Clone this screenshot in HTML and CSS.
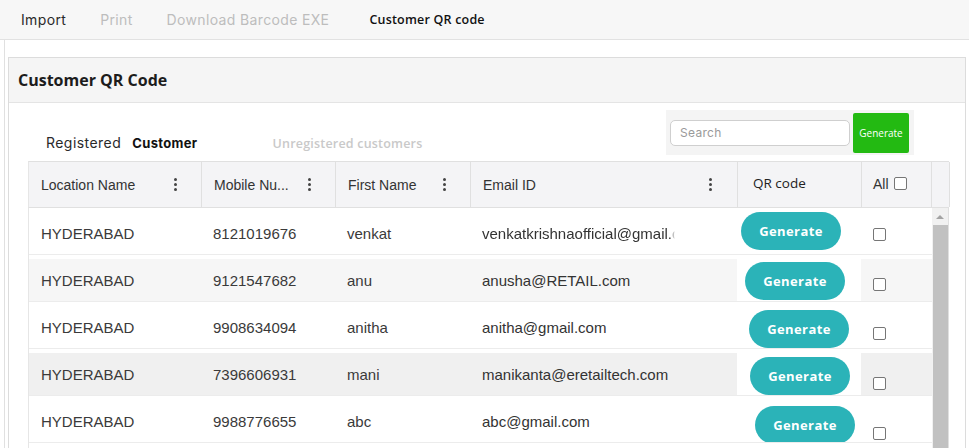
FILE: index.html
```html
<!DOCTYPE html>
<html lang="en">
<head>
  <meta charset="UTF-8">
  <meta name="viewport" content="width=device-width, initial-scale=1.0">
  <title>Customer QR Code</title>
  <link rel="stylesheet" href="styles.css">
</head>
<body>
  <nav class="top-tabs">
    <a href="#" class="top-tab">Import</a>
    <a href="#" class="top-tab muted">Print</a>
    <a href="#" class="top-tab muted">Download Barcode EXE</a>
    <a href="#" class="top-tab current">Customer QR code</a>
  </nav>

  <div class="page">
    <div class="card">
      <div class="card-header">Customer QR Code</div>

      <div class="card-body">
        <div class="toolbar">
          <div class="sub-tabs">
            <span class="sub-tab">Registered</span>
            <span class="sub-tab strong">Customer</span>
            <span class="sub-tab faded">Unregistered customers</span>
          </div>
          <div class="search-box">
            <input type="text" class="search-input" placeholder="Search">
            <button class="btn-green">Generate</button>
          </div>
        </div>

        <div class="grid">
          <div class="grid-head">
            <div class="th">Location Name <span class="dots"><i></i><i></i><i></i></span></div>
            <div class="th">Mobile Nu... <span class="dots"><i></i><i></i><i></i></span></div>
            <div class="th">First Name <span class="dots"><i></i><i></i><i></i></span></div>
            <div class="th">Email ID <span class="dots"><i></i><i></i><i></i></span></div>
            <div class="th qr-head">QR code</div>
            <div class="th all-head">All <input type="checkbox" class="chk"></div>
            <div class="th sb-head"></div>
          </div>

          <div class="grid-body">
            <div class="rows">
              <div class="row">
                <div class="td">HYDERABAD</div>
                <div class="td">8121019676</div>
                <div class="td">venkat</div>
                <div class="td email clipped">venkatkrishnaofficial@gmail.com</div>
                <div class="td qr"><button class="btn-gen">Generate</button></div>
                <div class="td pick"><input type="checkbox" class="chk"></div>
              </div>
              <div class="row shade">
                <div class="td">HYDERABAD</div>
                <div class="td">9121547682</div>
                <div class="td">anu</div>
                <div class="td email">anusha@RETAIL.com</div>
                <div class="td qr"><button class="btn-gen">Generate</button></div>
                <div class="td pick"><input type="checkbox" class="chk"></div>
              </div>
              <div class="row">
                <div class="td">HYDERABAD</div>
                <div class="td">9908634094</div>
                <div class="td">anitha</div>
                <div class="td email">anitha@gmail.com</div>
                <div class="td qr"><button class="btn-gen">Generate</button></div>
                <div class="td pick"><input type="checkbox" class="chk"></div>
              </div>
              <div class="row hover">
                <div class="td">HYDERABAD</div>
                <div class="td">7396606931</div>
                <div class="td">mani</div>
                <div class="td email">manikanta@eretailtech.com</div>
                <div class="td qr"><button class="btn-gen">Generate</button></div>
                <div class="td pick"><input type="checkbox" class="chk"></div>
              </div>
              <div class="row">
                <div class="td">HYDERABAD</div>
                <div class="td">9988776655</div>
                <div class="td">abc</div>
                <div class="td email">abc@gmail.com</div>
                <div class="td qr"><button class="btn-gen">Generate</button></div>
                <div class="td pick"><input type="checkbox" class="chk"></div>
              </div>
            </div>
            <div class="scrollbar">
              <span class="sb-arrow"></span>
              <span class="sb-thumb"></span>
            </div>
          </div>
        </div>
      </div>
    </div>
  </div>
</body>
</html>
```

FILE: styles.css
```css
* {
  margin: 0;
  padding: 0;
  box-sizing: border-box;
}

body {
  font-family: 'Liberation Sans', Arial, sans-serif;
  background: #fff;
  color: #333;
  width: 969px;
  height: 448px;
  overflow: hidden;
}

/* top navigation */
.top-tabs {
  height: 40px;
  background: #f7f7f7;
  border-bottom: 1px solid #e2e2e2;
  display: flex;
  align-items: center;
  padding-left: 21px;
  gap: 34px;
}

.top-tab {
  font-family: 'Inter', sans-serif;
  font-size: 14px;
  letter-spacing: 0.35px;
  color: #2a2a2a;
  text-decoration: none;
}

.top-tab.muted {
  color: #bdbdbd;
}

.top-tab.current {
  font-family: 'Open Sans', sans-serif;
  font-weight: 600;
  font-size: 12.5px;
  letter-spacing: 0.2px;
  color: #111;
  margin-left: 6px;
}

.page {
  margin-left: 4px;
  border-left: 1px solid #e0e0e0;
  padding: 17px 3px 0 3px;
}

.card {
  border: 1px solid #dcdcdc;
  height: 400px;
}

.card-header {
  height: 45px;
  background: #f5f5f5;
  border-bottom: 1px solid #e4e4e4;
  display: flex;
  align-items: center;
  padding-left: 9px;
  font-family: 'Open Sans', sans-serif;
  font-weight: 700;
  font-size: 16px;
  color: #1c1c1c;
}

.card-body {
  padding: 7px 15px 0 19px;
}

/* registered / unregistered tabs + search */
.toolbar {
  height: 51px;
  display: flex;
  justify-content: space-between;
  align-items: flex-start;
}

.sub-tabs {
  display: flex;
  align-items: baseline;
  padding: 24px 0 0 18px;
}

.sub-tab {
  font-family: 'Inter', sans-serif;
  font-size: 14px;
  letter-spacing: 0.45px;
  color: #2a2a2a;
}

.sub-tab.strong {
  font-weight: 700;
  font-size: 13px;
  letter-spacing: 0.35px;
  color: #111;
  margin-left: 11px;
}

.sub-tab.faded {
  font-family: 'Open Sans', sans-serif;
  font-weight: 600;
  font-size: 12.5px;
  letter-spacing: 0.2px;
  color: #c9c9c9;
  margin-left: 75px;
}

.search-box {
  display: flex;
  align-items: center;
  gap: 3px;
  background: #f4f4f4;
  height: 45px;
  padding: 0 5px 0 4px;
  margin-right: 36px;
}

.search-input {
  width: 180px;
  height: 26px;
  border: 1px solid #cfcfcf;
  border-radius: 5px;
  padding-left: 9px;
  font-family: 'Inter', sans-serif;
  font-size: 12px;
  letter-spacing: 0.3px;
  color: #333;
  background: #fff;
  outline: none;
}

.search-input::placeholder {
  color: #9a9a9a;
}

.btn-green {
  width: 56px;
  height: 40px;
  border: none;
  border-radius: 2px;
  background: #23ba12;
  color: #fff;
  font-family: 'Open Sans', sans-serif;
  font-size: 10px;
}

/* data grid */
.grid {
  width: 921px;
}

.grid-head {
  display: grid;
  grid-template-columns: 173px 134px 135px 267px 124px 70px 18px;
  height: 47px;
  background: #f4f4f6;
  border-top: 1px solid #e0e0e0;
  border-bottom: 1px solid #e0e0e0;
  border-left: 1px solid #e6e6e6;
}

.th {
  display: flex;
  align-items: center;
  justify-content: space-between;
  padding: 0 24px 0 12px;
  font-size: 14px;
  color: #333;
  border-right: 1px solid #e0e0e0;
}

.th:nth-child(4) {
  padding-right: 25px;
}

.th.qr-head {
  justify-content: flex-start;
  padding-left: 15px;
  font-family: 'Open Sans', sans-serif;
  font-size: 13.5px;
  color: #222;
  padding-bottom: 4px;
}

.th.all-head {
  justify-content: flex-start;
  gap: 5px;
  padding-left: 11px;
  padding-bottom: 2px;
}

.th.sb-head {
  border-right: 1px solid #e0e0e0;
  padding: 0;
}

.dots {
  display: flex;
  flex-direction: column;
  gap: 2px;
}

.dots i {
  width: 3px;
  height: 3px;
  border-radius: 50%;
  background: #444;
}

.grid-body {
  display: flex;
  height: 240px;
  overflow: hidden;
  border-left: 1px solid #e6e6e6;
}

.rows {
  width: 903px;
}

.row {
  display: grid;
  grid-template-columns: 172px 134px 135px 267px 124px 70px;
  height: 47px;
  border-top: 4px solid #fff;
  border-bottom: 1px solid #ececec;
  background: #fff;
}

.row.shade {
  background: #f6f6f6;
}

.row.hover {
  background: #f0f0f0;
}

.td {
  display: flex;
  align-items: center;
  padding-left: 12px;
  font-size: 15px;
  color: #3a3a3a;
  white-space: nowrap;
  overflow: hidden;
}

.td.email {
  color: #333;
}

.td.clipped {
  -webkit-mask-image: linear-gradient(to right, #000 200px, transparent 205px);
  mask-image: linear-gradient(to right, #000 200px, transparent 205px);
}

.td.qr {
  background: #fff;
  align-items: flex-start;
  padding-left: 4px;
}

.btn-gen {
  width: 100px;
  height: 38px;
  border: none;
  border-radius: 19px;
  background: #2bb3b8;
  color: #fff;
  font-family: 'Open Sans', sans-serif;
  font-weight: 700;
  font-size: 13px;
  letter-spacing: 0.4px;
}

.row:nth-child(2) .td.qr { padding: 3px 0 0 8px; }
.row:nth-child(3) .td.qr { padding: 4px 0 0 12px; }
.row:nth-child(4) .td.qr { padding: 4px 0 0 13px; }
.row:nth-child(5) .td.qr { padding: 6px 0 0 18px; }

.td.pick {
  align-items: flex-start;
  padding: 16px 0 0 12px;
}

.row:nth-child(2) .td.pick { padding-top: 19px; }
.row:nth-child(3) .td.pick { padding-top: 21px; }
.row:nth-child(4) .td.pick { padding-top: 24px; }
.row:nth-child(5) .td.pick { padding-top: 27px; }

.chk {
  appearance: none;
  -webkit-appearance: none;
  width: 13px;
  height: 13px;
  border: 1px solid #767676;
  border-radius: 2px;
  background: #fff;
}

/* fake scrollbar */
.scrollbar {
  width: 17px;
  background: #f1f1f1;
  display: flex;
  flex-direction: column;
  align-items: center;
  border-right: 1px solid #e0e0e0;
}

.sb-arrow {
  margin-top: 7px;
  width: 0;
  height: 0;
  border-left: 4px solid transparent;
  border-right: 4px solid transparent;
  border-bottom: 4px solid #a3a3a3;
}

.sb-thumb {
  margin-top: 6px;
  width: 15px;
  flex: 1;
  background: #c1c1c1;
}
```
